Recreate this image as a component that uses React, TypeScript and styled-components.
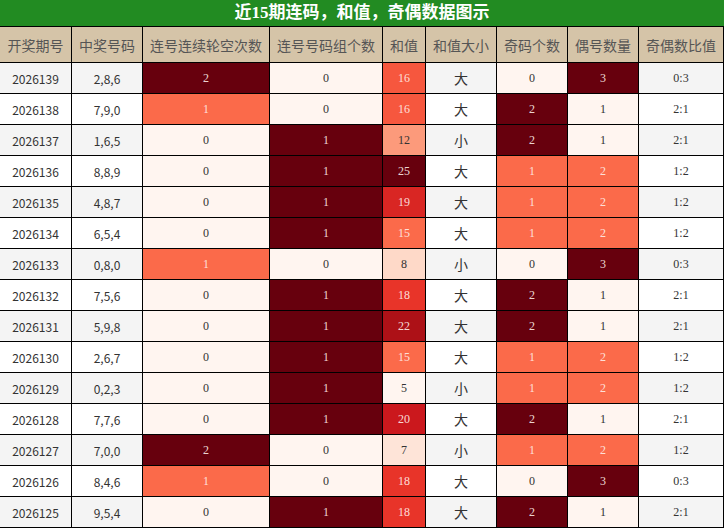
import React from "react";
import styled, { createGlobalStyle } from "styled-components";

const Global = createGlobalStyle`
  html, body { margin: 0; padding: 0; background: #fff; }
  body { font-family: "Liberation Serif", "Noto Sans CJK SC", serif; }
`;

const Frame = styled.div`
  width: 724px;
  height: 528px;
  background: #000;
  display: flex;
  flex-direction: column;
  gap: 1px;
  overflow: hidden;
`;

const Title = styled.div`
  height: 26px;
  background: #228b22;
  color: #fff;
  font-family: "Liberation Serif", "Noto Sans CJK SC", serif;
  font-weight: bold;
  font-size: 17px;
  line-height: 26px;
  text-align: center;
`;

const Grid = styled.div`
  display: grid;
  grid-template-columns: 71px 70px 126px 112px 42px 70px 70px 70px 84px;
  grid-template-rows: 35px repeat(15, 30px);
  gap: 1px;
  padding: 0 1px 1px 0;
`;

const HeadCell = styled.div`
  background: #d5c4a8;
  color: #555;
  font-family: "Noto Sans CJK SC", sans-serif;
  font-size: 14px;
  display: flex;
  align-items: center;
  justify-content: center;
  white-space: nowrap;
`;

const PlainCell = styled.div<{ $alt: boolean; $sans?: boolean; $cjk?: boolean }>`
  background: ${(p) => (p.$alt ? "#f4f4f4" : "#ffffff")};
  color: #333;
  font-family: ${(p) =>
    p.$sans ? `"Noto Sans CJK SC", sans-serif` : `"Liberation Serif", "Noto Sans CJK SC", serif`};
  font-size: ${(p) => (p.$cjk ? "14px" : "12px")};
  display: flex;
  align-items: center;
  justify-content: center;
`;

const HeatCell = styled.div<{ $bg: string; $light: boolean }>`
  background: ${(p) => p.$bg};
  color: ${(p) => (p.$light ? "rgba(255,240,235,0.9)" : "#333")};
  font-family: "Liberation Serif", serif;
  font-size: 12px;
  display: flex;
  align-items: center;
  justify-content: center;
`;

const REDS = ["#fff5f0", "#fee0d2", "#fcbba1", "#fc9272", "#fb6a4a", "#ef3b2c", "#cb181d", "#a50f15", "#67000d"];

function hex(c: string): number[] {
  return [1, 3, 5].map((i) => parseInt(c.slice(i, i + 2), 16));
}

function reds(t: number): string {
  const x = Math.max(0, Math.min(1, t)) * (REDS.length - 1);
  const i = Math.min(Math.floor(x), REDS.length - 2);
  const f = x - i;
  const a = hex(REDS[i]);
  const b = hex(REDS[i + 1]);
  const m = a.map((v, k) => Math.round(v + (b[k] - v) * f));
  return `rgb(${m[0]},${m[1]},${m[2]})`;
}

type Row = [string, string, number, number, number, string, number, number, string];

const rows: Row[] = [
  ["2026139", "2,8,6", 2, 0, 16, "大", 0, 3, "0:3"],
  ["2026138", "7,9,0", 1, 0, 16, "大", 2, 1, "2:1"],
  ["2026137", "1,6,5", 0, 1, 12, "小", 2, 1, "2:1"],
  ["2026136", "8,8,9", 0, 1, 25, "大", 1, 2, "1:2"],
  ["2026135", "4,8,7", 0, 1, 19, "大", 1, 2, "1:2"],
  ["2026134", "6,5,4", 0, 1, 15, "大", 1, 2, "1:2"],
  ["2026133", "0,8,0", 1, 0, 8, "小", 0, 3, "0:3"],
  ["2026132", "7,5,6", 0, 1, 18, "大", 2, 1, "2:1"],
  ["2026131", "5,9,8", 0, 1, 22, "大", 2, 1, "2:1"],
  ["2026130", "2,6,7", 0, 1, 15, "大", 1, 2, "1:2"],
  ["2026129", "0,2,3", 0, 1, 5, "小", 1, 2, "1:2"],
  ["2026128", "7,7,6", 0, 1, 20, "大", 2, 1, "2:1"],
  ["2026127", "7,0,0", 2, 0, 7, "小", 1, 2, "1:2"],
  ["2026126", "8,4,6", 1, 0, 18, "大", 0, 3, "0:3"],
  ["2026125", "9,5,4", 0, 1, 18, "大", 2, 1, "2:1"],
];

const headers = ["开奖期号", "中奖号码", "连号连续轮空次数", "连号号码组个数", "和值", "和值大小", "奇码个数", "偶号数量", "奇偶数比值"];

function range(col: number): [number, number] {
  const vals = rows.map((r) => r[col] as number);
  return [Math.min(...vals), Math.max(...vals)];
}

const heatCols = [2, 3, 4, 6, 7];
const ranges: Record<number, [number, number]> = {};
heatCols.forEach((c) => (ranges[c] = range(c)));

function Heat({ col, value }: { col: number; value: number }) {
  const [lo, hi] = ranges[col];
  const t = hi === lo ? 0 : (value - lo) / (hi - lo);
  return (
    <HeatCell $bg={reds(t)} $light={t >= 0.5}>
      {value}
    </HeatCell>
  );
}

export default function App() {
  return (
    <>
      <Global />
      <Frame>
        <Title>近15期连码，和值，奇偶数据图示</Title>
        <Grid>
          {headers.map((h) => (
            <HeadCell key={h}>{h}</HeadCell>
          ))}
          {rows.map((r, i) => {
            const alt = i % 2 === 0;
            return (
              <React.Fragment key={r[0]}>
                <PlainCell $alt={alt} $sans>{r[0]}</PlainCell>
                <PlainCell $alt={alt} $sans>{r[1]}</PlainCell>
                <Heat col={2} value={r[2]} />
                <Heat col={3} value={r[3]} />
                <Heat col={4} value={r[4]} />
                <PlainCell $alt={alt} $cjk>{r[5]}</PlainCell>
                <Heat col={6} value={r[6]} />
                <Heat col={7} value={r[7]} />
                <PlainCell $alt={alt}>{r[8]}</PlainCell>
              </React.Fragment>
            );
          })}
        </Grid>
      </Frame>
    </>
  );
}
